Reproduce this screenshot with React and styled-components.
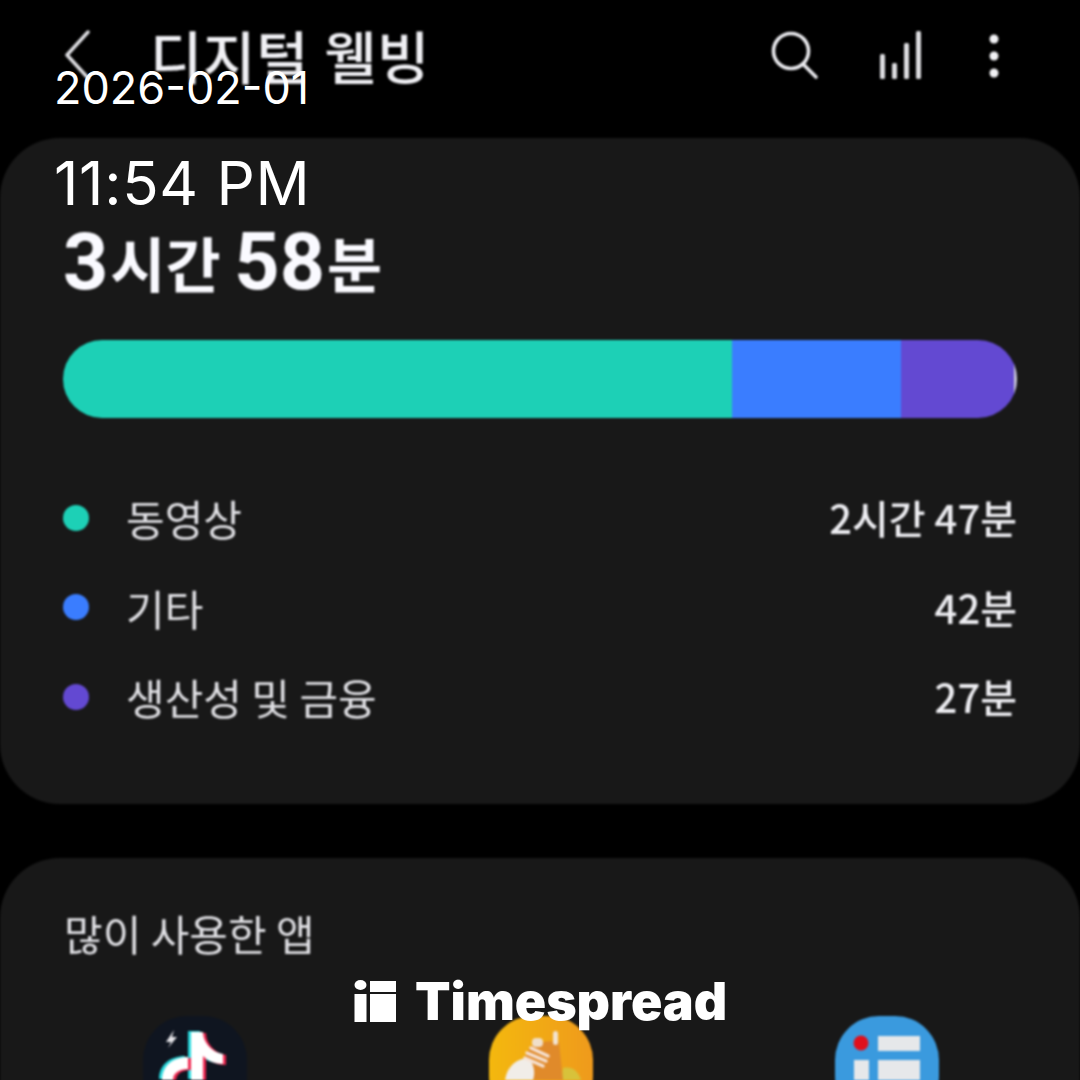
import React from 'react'
import styled, { createGlobalStyle } from 'styled-components'

const GlobalStyle = createGlobalStyle`
  html, body {
    margin: 0;
    padding: 0;
    background: #000;
  }
  * {
    box-sizing: border-box;
  }
`

const categories = [
  { name: '동영상', time: '2시간 47분', color: '#1dd0b6', share: 669 },
  { name: '기타', time: '42분', color: '#3a7dff', share: 169 },
  { name: '생산성 및 금융', time: '27분', color: '#6349d2', share: 116 },
]

const BackIcon = () => (
  <svg width="34" height="56" viewBox="0 0 34 56" fill="none" stroke="#e0e0e4" strokeWidth="3.5" strokeLinecap="round" strokeLinejoin="round">
    <path d="M24 2 L3 25 L24 48" />
  </svg>
)

const SearchIcon = () => (
  <svg width="50" height="50" viewBox="0 0 50 50" fill="none" stroke="#ececf0" strokeWidth="3.6" strokeLinecap="round">
    <circle cx="21" cy="20" r="17.5" />
    <path d="M33 33 L46 46" />
  </svg>
)

const ChartIcon = () => (
  <svg width="44" height="50" viewBox="0 0 44 50" fill="#dcdce0">
    <rect x="1" y="23" width="5" height="25" rx="1.5" />
    <rect x="13" y="32" width="5" height="16" rx="1.5" />
    <rect x="25" y="12" width="5" height="36" rx="1.5" />
    <rect x="37" y="0" width="5" height="48" rx="1.5" />
  </svg>
)

const MoreIcon = () => (
  <svg width="12" height="46" viewBox="0 0 12 46" fill="#f2f2f5">
    <circle cx="6" cy="6" r="4.5" />
    <circle cx="6" cy="23" r="4.5" />
    <circle cx="6" cy="40" r="4.5" />
  </svg>
)

const LogoMark = () => (
  <svg width="43" height="42" viewBox="0 0 43 42" fill="#fff">
    <ellipse cx="6.5" cy="5" rx="6" ry="5" />
    <rect x="0.5" y="14" width="12" height="28" />
    <rect x="16" y="1" width="26" height="11" />
    <rect x="16" y="14" width="26" height="28" />
  </svg>
)

const noteStem = 'M48 16 H60 C60 26 68 36 80 38 V48 C72 48 65 45 60 40 V64 H48 Z'
const noteBowl = 'M45 41 V53 C36 53 30 57 30 64 H19 C19 50 30 41 45 41 Z'

const TikTokIcon = () => (
  <svg width="104" height="64" viewBox="0 0 104 64">
    <path d="M31 14 L23 26 L28 26 L25 32 L34 21 L29 21 Z" fill="#e4e4e8" />
    <g fill="#25d8dc" transform="translate(-3 -1)">
      <path d={noteStem} />
      <path d={noteBowl} />
    </g>
    <g fill="#f0264f" transform="translate(3 1)">
      <path d={noteStem} />
      <path d={noteBowl} />
    </g>
    <g fill="#fff">
      <path d={noteStem} />
      <path d={noteBowl} />
    </g>
  </svg>
)

const ShoeIcon = () => (
  <svg width="104" height="64" viewBox="0 0 104 64">
    <path d="M72 64 L74 52 C82 50 89 54 92 64 Z" fill="#d8c23a" />
    <path d="M42 30 C50 26 62 24 70 26 L74 64 L36 64 L34 44 Z" fill="#e08a2a" />
    <rect x="64" y="15" width="5" height="14" rx="2.5" fill="#f3e3cf" />
    <rect x="43" y="22" width="11" height="9" rx="4" fill="#f0dfca" />
    <path d="M16 64 C18 50 28 42 40 42 C46 50 46 58 44 64 Z" fill="#f1ede8" />
    <g stroke="#f6e3d6" strokeWidth="3.5" strokeLinecap="round">
      <path d="M36 42 L54 50" />
      <path d="M38 37 L57 45" />
      <path d="M42 32 L59 40" />
    </g>
  </svg>
)

const ListIcon = () => (
  <svg width="104" height="64" viewBox="0 0 104 64">
    <circle cx="26" cy="27" r="7.5" fill="#e0101c" />
    <rect x="43" y="20" width="42" height="15" fill="#e6e8ea" />
    <rect x="43" y="44" width="42" height="20" fill="#e6e8ea" />
    <rect x="19" y="44" width="15" height="20" fill="#e6e8ea" />
  </svg>
)

const App = () => (
  <>
    <GlobalStyle />
    <Page>
      <Screen>
        <Header>
          <BackSlot>
            <BackIcon />
          </BackSlot>
          <Title>디지털 웰빙</Title>
          <Actions>
            <SearchIcon />
            <ChartIcon />
            <MoreIcon />
          </Actions>
        </Header>

        <SummaryCard>
          <Total>
            <Big>3</Big>시간 <Big>58</Big>분
          </Total>
          <Bar>
            {categories.map((item) => (
              <Segment key={item.name} $color={item.color} $share={item.share} />
            ))}
          </Bar>
          <Legend>
            {categories.map((item) => (
              <LegendRow key={item.name}>
                <Dot $color={item.color} />
                <LegendName>{item.name}</LegendName>
                <LegendTime>{item.time}</LegendTime>
              </LegendRow>
            ))}
          </Legend>
        </SummaryCard>

        <AppsCard>
          <AppsTitle>많이 사용한 앱</AppsTitle>
          <AppRow>
            <AppTile $bg="#0f1520"><TikTokIcon /></AppTile>
            <AppTile $bg="linear-gradient(90deg, #f4b80e, #ef9a1c)"><ShoeIcon /></AppTile>
            <AppTile $bg="#3a9ade"><ListIcon /></AppTile>
          </AppRow>
        </AppsCard>
      </Screen>

      <Stamp>
        <StampDate>2026-02-01</StampDate>
        <StampTime>11:54 PM</StampTime>
      </Stamp>

      <Watermark>
        <LogoMark />
        <WatermarkText>Timespread</WatermarkText>
      </Watermark>
    </Page>
  </>
)

export default App

const Page = styled.div`
  position: relative;
  width: 1080px;
  height: 1080px;
  overflow: hidden;
  background: #000;
  font-family: "Noto Sans CJK KR", "Noto Sans", sans-serif;
`

const Screen = styled.div`
  display: flex;
  flex-direction: column;
  filter: blur(0.8px);
`

const Header = styled.header`
  height: 138px;
  display: flex;
  align-items: flex-start;
  padding: 24px 80px 0 64px;
`

const BackSlot = styled.div`
  width: 86px;
  display: flex;
  padding-top: 6px;
`

const Title = styled.h1`
  margin: 0;
  font-size: 57px;
  line-height: 60px;
  font-weight: 500;
  color: #f0f0f4;
  letter-spacing: 0.5px;
  word-spacing: 2px;
`

const Actions = styled.div`
  margin-left: auto;
  display: flex;
  align-items: flex-start;
  gap: 59px;
  padding-top: 7px;

  svg:last-child {
    margin-top: 2px;
    margin-left: 6px;
  }
`

const Card = styled.section`
  background: #181818;
  border-radius: 60px;
`

const SummaryCard = styled(Card)`
  height: 666px;
  padding: 82px 63px 0 63px;
  display: flex;
  flex-direction: column;
`

const Total = styled.div`
  height: 84px;
  display: flex;
  align-items: center;
  white-space: pre;
  font-size: 60px;
  font-weight: 700;
  line-height: 84px;
  color: #fafaff;
`

const Big = styled.span`
  font-family: "Roboto", "Noto Sans", sans-serif;
  font-size: 79px;
  font-weight: 700;
  margin-right: 2px;
`

const Bar = styled.div`
  position: relative;
  margin-top: 36px;
  height: 78px;
  display: flex;
  overflow: hidden;
  border-radius: 39px;

  &::after {
    content: "";
    position: absolute;
    right: 0;
    top: 22px;
    width: 3px;
    height: 34px;
    border-radius: 2px;
    background: #c8c8d4;
  }
`

const Segment = styled.div`
  flex: ${(p) => p.$share} 0 0;
  background: ${(p) => p.$color};
`

const Legend = styled.div`
  margin-top: 77px;
  display: flex;
  flex-direction: column;
  gap: 44.5px;
`

const LegendRow = styled.div`
  height: 45px;
  display: flex;
  align-items: center;
`

const Dot = styled.span`
  width: 26px;
  height: 26px;
  border-radius: 50%;
  background: ${(p) => p.$color};
  margin-right: 37px;
`

const LegendName = styled.span`
  font-size: 42px;
  line-height: 45px;
  color: #e0e0e4;
`

const LegendTime = styled.span`
  margin-left: auto;
  font-size: 40px;
  line-height: 45px;
  font-weight: 500;
  color: #eeeef2;
`

const AppsCard = styled(Card)`
  margin-top: 54px;
  height: 400px;
  padding: 50px 64px 0;
`

const AppsTitle = styled.div`
  font-size: 42px;
  line-height: 50px;
  color: #e0e0e4;
`

const AppRow = styled.div`
  margin-top: 58px;
  display: flex;
  padding-left: 79px;
  gap: 242px;
`

const AppTile = styled.div`
  width: 104px;
  height: 104px;
  flex: none;
  border-radius: 44px;
  background: ${(p) => p.$bg};
  overflow: hidden;
`

const Stamp = styled.div`
  position: absolute;
  left: 54px;
  top: 60px;
  color: #fff;
  font-family: "Inter", "Liberation Sans", sans-serif;
  font-kerning: none;
`

const StampDate = styled.div`
  font-size: 45px;
  line-height: 56px;
  font-weight: 400;
`

const StampTime = styled.div`
  margin-top: 31px;
  font-size: 60px;
  line-height: 72px;
  font-weight: 400;
  letter-spacing: 0.7px;
`

const Watermark = styled.div`
  position: absolute;
  left: 354px;
  top: 980px;
  display: flex;
  align-items: center;
  gap: 18px;
`

const WatermarkText = styled.span`
  font-family: "Inter", "Liberation Sans", sans-serif;
  font-size: 51.8px;
  line-height: 42px;
  font-weight: 900;
  color: #fff;
`
